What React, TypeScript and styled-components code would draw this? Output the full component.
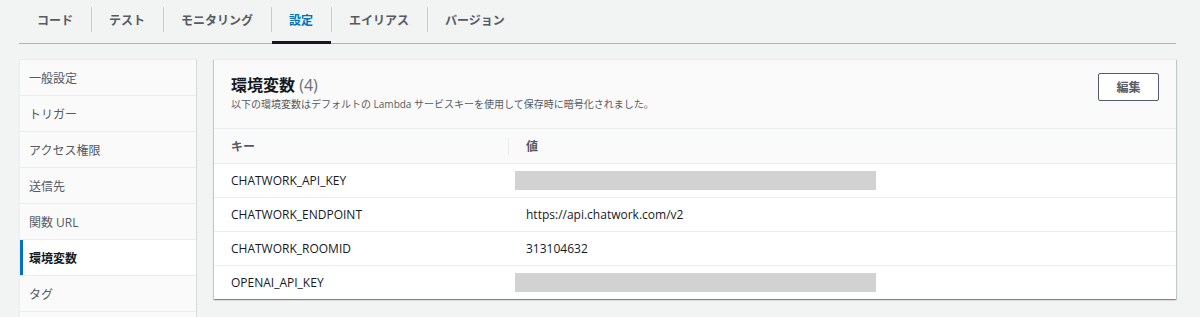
import styled, { createGlobalStyle } from "styled-components";

const GlobalStyle = createGlobalStyle`
  body {
    margin: 0;
    background: #f2f3f3;
    font-family: "Open Sans", "Noto Sans CJK JP", sans-serif;
    color: #16191f;
  }
`;

const tabs = ["コード", "テスト", "モニタリング", "設定", "エイリアス", "バージョン"];
const menu = ["一般設定", "トリガー", "アクセス権限", "送信先", "関数 URL", "環境変数", "タグ"];

const envVars = [
  { key: "CHATWORK_API_KEY", value: null },
  { key: "CHATWORK_ENDPOINT", value: "https://api.chatwork.com/v2" },
  { key: "CHATWORK_ROOMID", value: "313104632" },
  { key: "OPENAI_API_KEY", value: null },
];

const App = () => {
  return (
    <Page>
      <GlobalStyle />
      <TabBar>
        {tabs.map((tab, i) => (
          <Tab key={tab} $active={tab === "設定"} $first={i === 0}>
            {tab}
          </Tab>
        ))}
      </TabBar>

      <Body>
        <SideNav>
          {menu.map((item) => (
            <NavItem key={item} $active={item === "環境変数"}>
              {item}
            </NavItem>
          ))}
        </SideNav>

        <Panel>
          <PanelHeader>
            <div>
              <Title>
                環境変数 <Count>(4)</Count>
              </Title>
              <Description>
                以下の環境変数はデフォルトの Lambda サービスキーを使用して保存時に暗号化されました。
              </Description>
            </div>
            <EditButton>編集</EditButton>
          </PanelHeader>

          <Table>
            <thead>
              <tr>
                <HeadCell $divided>キー</HeadCell>
                <HeadCell>値</HeadCell>
              </tr>
            </thead>
            <tbody>
              {envVars.map((row) => (
                <tr key={row.key}>
                  <Cell>{row.key}</Cell>
                  <Cell>{row.value ?? <Masked />}</Cell>
                </tr>
              ))}
            </tbody>
          </Table>
        </Panel>
      </Body>
    </Page>
  );
};

const Page = styled.div`
  padding: 0 24px 0 19px;
  height: 317px;
  overflow: hidden;
`;

const TabBar = styled.div`
  display: flex;
  align-items: stretch;
  height: 44px;
  border-bottom: 1px solid #aab7b8;
  box-sizing: border-box;
`;

const Tab = styled.div<{ $active?: boolean; $first?: boolean }>`
  position: relative;
  display: flex;
  align-items: center;
  padding: 0 18px 3px;
  font-size: 12px;
  font-weight: 700;
  color: ${(p) => (p.$active ? "#0073bb" : "#545b64")};

  &::before {
    content: "";
    display: ${(p) => (p.$first ? "none" : "block")};
    position: absolute;
    left: 0;
    top: 7px;
    height: 25px;
    width: 1px;
    background: #c6cccd;
  }

  &::after {
    content: "";
    display: ${(p) => (p.$active ? "block" : "none")};
    position: absolute;
    left: 1px;
    right: 0;
    bottom: -1px;
    height: 3px;
    background: #16191f;
  }
`;

const Body = styled.div`
  display: flex;
  align-items: flex-start;
  gap: 17px;
  margin-top: 15px;
`;

const SideNav = styled.div`
  width: 178px;
  height: 300px;
  flex-shrink: 0;
  background: #fafafa;
  border-top: 1px solid #eaeded;
  border-left: 1px solid #eaeded;
  border-right: 1px solid #d5dbdb;
  box-sizing: border-box;
`;

const NavItem = styled.div<{ $active?: boolean }>`
  height: 36px;
  box-sizing: border-box;
  display: flex;
  align-items: center;
  padding-left: 9px;
  font-size: 12px;
  border-bottom: 1px solid #eaeded;
  background: ${(p) => (p.$active ? "#ffffff" : "#fafafa")};
  color: ${(p) => (p.$active ? "#16191f" : "#545b64")};
  font-weight: ${(p) => (p.$active ? 700 : 400)};
  box-shadow: ${(p) => (p.$active ? "inset 3px 0 0 #0073bb" : "none")};
`;

const Panel = styled.div`
  flex: 1;
  background: #ffffff;
  border-top: 1px solid #eaeded;
  box-shadow: 0 1px 1px 0 rgba(0, 28, 36, 0.3), 1px 1px 1px 0 rgba(0, 28, 36, 0.15),
    -1px 1px 1px 0 rgba(0, 28, 36, 0.15);
`;

const PanelHeader = styled.div`
  display: flex;
  justify-content: space-between;
  align-items: flex-start;
  background: #fafafa;
  padding: 13px 17px 0 17px;
  height: 69px;
  box-sizing: border-box;
  border-bottom: 1px solid #eaeded;
`;

const Title = styled.div`
  font-size: 16px;
  font-weight: 700;
  line-height: 24px;
  color: #16191f;
`;

const Count = styled.span`
  font-weight: 400;
  color: #687078;
`;

const Description = styled.div`
  font-size: 10px;
  line-height: 14px;
  color: #545b64;
`;

const EditButton = styled.button`
  width: 61px;
  height: 28px;
  background: #ffffff;
  border: 1px solid #545b64;
  border-radius: 2px;
  font-family: "Open Sans", "Noto Sans CJK JP", sans-serif;
  font-size: 12px;
  font-weight: 700;
  color: #545b64;
`;

const Table = styled.table`
  width: 100%;
  border-collapse: collapse;
`;

const HeadCell = styled.th<{ $divided?: boolean }>`
  position: relative;
  height: 34px;
  padding: 0 17px;
  text-align: left;
  font-size: 12px;
  font-weight: 700;
  color: #545b64;
  background: #fafafa;
  width: ${(p) => (p.$divided ? "261px" : "auto")};

  &::after {
    content: "";
    display: ${(p) => (p.$divided ? "block" : "none")};
    position: absolute;
    right: 0;
    top: 9px;
    bottom: 8px;
    width: 1px;
    background: #eaeded;
  }
`;

const Cell = styled.td`
  height: 33px;
  padding: 0 17px;
  font-size: 12px;
  color: #16191f;
  border-top: 1px solid #eaeded;
`;

const Masked = styled.div`
  width: 361px;
  height: 19px;
  margin-left: -11px;
  background: #d2d2d2;
`;

export default App;
